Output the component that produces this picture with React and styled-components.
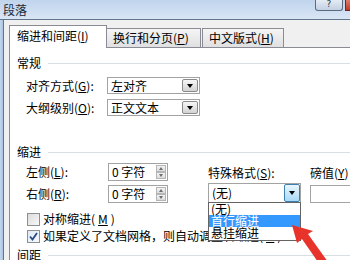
import React from "react";
import styled, { createGlobalStyle } from "styled-components";

const FONT = `"Noto Sans CJK SC", "Liberation Sans", sans-serif`;

const GlobalStyle = createGlobalStyle`
  html, body { margin: 0; padding: 0; background: #f0f0f0; }
  body { width: 350px; height: 260px; overflow: hidden; }
  * { box-sizing: border-box; }
`;

const Window = styled.div`
  position: relative;
  width: 350px;
  height: 260px;
  overflow: hidden;
  display: flex;
  flex-direction: column;
  font-family: ${FONT};
  font-size: 12px;
  line-height: 14px;
  color: #000;
  background: #f0f0f0;
`;

const TitleBar = styled.div`
  flex: none;
  height: 20px;
  display: flex;
  align-items: flex-start;
  justify-content: space-between;
  background: linear-gradient(#c0d4ec, #d9e6f5);
  border-bottom: 1px solid #63758d;
`;

const Title = styled.div`
  padding: 3px 0 0 3px;
  font-size: 12px;
  color: #1c2a3a;
`;

const Controls = styled.div`
  display: flex;
  gap: 2px;
`;

const HelpButton = styled.div`
  width: 28px;
  height: 11px;
  border: 1px solid #5c6b82;
  border-top: none;
  border-radius: 0 0 3px 3px;
  background: linear-gradient(#e4ebf4, #c2d0e2);
  font-family: "DejaVu Sans", sans-serif;
  font-size: 9px;
  line-height: 9px;
  text-align: center;
  color: #2c3644;
`;

const CloseButton = styled.div`
  width: 5px;
  height: 11px;
  border-left: 1px solid #6b2a22;
  border-bottom: 1px solid #6b2a22;
  background: linear-gradient(#e07a68, #c2392a);
`;

const Body = styled.div`
  flex: 1;
  display: flex;
  min-height: 0;
`;

const FrameEdge = styled.div`
  flex: none;
  width: 4px;
  background: linear-gradient(90deg, #c3d7ee, #a9c3e2);
  border-right: 1px solid #63758d;
`;

const Client = styled.div`
  flex: 1;
  min-width: 0;
  display: flex;
  flex-direction: column;
  padding: 5px 0 0 5px;
`;

const TabStrip = styled.div`
  flex: none;
  height: 22px;
  display: flex;
  align-items: flex-end;
  position: relative;
  z-index: 1;
`;

const Tab = styled.div`
  flex: none;
  width: ${(p) => p.$width}px;
  height: ${(p) => (p.$active ? 23 : 19)}px;
  margin-left: ${(p) => p.$gap || 0}px;
  margin-bottom: ${(p) => (p.$active ? -1 : 0)}px;
  padding: ${(p) => (p.$active ? "3px 0 0 7px" : "2px 0 0 6px")};
  border: 1px solid #898c95;
  border-bottom: none;
  background: ${(p) =>
    p.$active ? "#ffffff" : "linear-gradient(#f5f5f5, #e0e0e0)"};
  white-space: nowrap;
`;

const Panel = styled.div`
  flex: 1;
  display: flex;
  flex-direction: column;
  padding: 8px 0 0 7px;
  background: #ffffff;
  border-top: 1px solid #898c95;
  border-left: 1px solid #898c95;
`;

const SectionHeader = styled.div`
  display: flex;
  align-items: center;
  gap: 7px;
  height: 14px;
  margin-top: ${(p) => p.$top || 0}px;
  &::after {
    content: "";
    flex: 1;
    height: 1px;
    background: #d5dfe5;
  }
`;

const FieldRow = styled.div`
  display: flex;
  align-items: center;
  height: ${(p) => p.$height || 17}px;
  margin-left: ${(p) => p.$indent ?? 9}px;
  margin-top: ${(p) => p.$top || 0}px;
`;

const Label = styled.div`
  flex: none;
  width: ${(p) => p.$width || 82}px;
  white-space: nowrap;
`;

const Combo = styled.div`
  position: relative;
  flex: none;
  width: ${(p) => p.$width}px;
  height: ${(p) => p.$height || 17}px;
  margin-top: ${(p) => p.$top || 0}px;
  display: flex;
  align-items: center;
  justify-content: space-between;
  padding: 0 0 0 3px;
  border: 1px solid #a3a3a3;
  background: #fff;
  white-space: nowrap;
`;

const ArrowButton = styled.div`
  flex: none;
  align-self: stretch;
  width: 16px;
  margin: ${(p) => (p.$hot ? "0" : "1px")};
  display: flex;
  align-items: center;
  justify-content: center;
  border: 1px solid ${(p) => (p.$hot ? "#3c7fb1" : "#8a8a8a")};
  border-radius: 2px;
  background: ${(p) =>
    p.$hot
      ? "linear-gradient(#eaf6fd, #a7d9f5)"
      : "linear-gradient(#f6f6f6, #d3d3d3)"};
`;

const Caret = styled.span`
  width: 0;
  height: 0;
  border-left: 3.5px solid transparent;
  border-right: 3.5px solid transparent;
  border-top: 4px solid #000;
`;

const Spinner = styled.div`
  flex: none;
  width: 60px;
  height: 18px;
  display: flex;
  align-items: center;
  justify-content: space-between;
  padding-left: 3px;
  border: 1px solid #a3a3a3;
  background: #fff;
  white-space: nowrap;
`;

const SpinButtons = styled.div`
  flex: none;
  align-self: stretch;
  width: 10px;
  margin: 1px;
  display: flex;
  flex-direction: column;
  gap: 0;
`;

const SpinHalf = styled.div`
  flex: 1;
  display: flex;
  align-items: center;
  justify-content: center;
  border: 1px solid #b5b5b5;
  background: linear-gradient(#f4f4f4, #dcdcdc);
  &::before {
    content: "";
    border-left: 2.5px solid transparent;
    border-right: 2.5px solid transparent;
    ${(p) =>
      p.$up
        ? "border-bottom: 3px solid #6d6d6d;"
        : "border-top: 3px solid #6d6d6d;"}
  }
`;

const IndentArea = styled.div`
  display: flex;
  gap: 40px;
  margin: 4px 0 0 9px;
`;

const Column = styled.div`
  flex: none;
  display: flex;
  flex-direction: column;
  gap: ${(p) => p.$gap || 0}px;
  width: ${(p) => (p.$width ? `${p.$width}px` : "auto")};
`;

const SideFields = styled.div`
  display: flex;
  gap: 10px;
`;

const StackLabel = styled.div`
  margin-top: 3px;
  white-space: nowrap;
`;

const TextBox = styled.div`
  width: 60px;
  height: 18px;
  margin-top: 5px;
  border: 1px solid #a3a3a3;
  background: #fff;
`;

const DropList = styled.div`
  position: absolute;
  top: 100%;
  left: -1px;
  width: 93px;
  z-index: 2;
  border: 1px solid #646464;
  background: #fff;
  padding-bottom: 1px;
`;

const DropItem = styled.div`
  height: 12px;
  line-height: 12px;
  padding-left: 2px;
  color: ${(p) => (p.$selected ? "#fff" : "#000")};
  background: ${(p) => (p.$selected ? "#3399ff" : "transparent")};
`;

const CheckRow = styled.div`
  display: flex;
  align-items: center;
  gap: 3px;
  height: 14px;
  margin: ${(p) => p.$top || 0}px 0 0 10px;
  white-space: nowrap;
`;

const Box = styled.div`
  flex: none;
  width: 13px;
  height: 13px;
  display: flex;
  align-items: center;
  justify-content: center;
  border: 1px solid #8e8f8f;
  background: ${(p) =>
    p.$checked
      ? "linear-gradient(135deg, #dfe9f5, #f6f9fd)"
      : "linear-gradient(135deg, #dcdcdc, #f8f8f8)"};
`;

const Arrow = styled.svg`
  position: absolute;
  left: 0;
  top: 0;
  pointer-events: none;
  z-index: 3;
`;

const Key = ({ k }) => (
  <>
    (<u>{k}</u>)
  </>
);

export default function App() {
  return (
    <>
      <GlobalStyle />
      <Window>
        <TitleBar>
          <Title>段落</Title>
          <Controls>
            <HelpButton>?</HelpButton>
            <CloseButton />
          </Controls>
        </TitleBar>
        <Body>
          <FrameEdge />
          <Client>
            <TabStrip>
              <Tab $active $width={98}>
                缩进和间距<Key k="I" />
              </Tab>
              <Tab $width={95} $gap={-1}>
                换行和分页<Key k="P" />
              </Tab>
              <Tab $width={82} $gap={1}>
                中文版式<Key k="H" />
              </Tab>
            </TabStrip>
            <Panel>
              <SectionHeader>常规</SectionHeader>
              <FieldRow $top={7}>
                <Label $width={81}>
                  对齐方式<Key k="G" />:
                </Label>
                <Combo $width={93}>
                  左对齐
                  <ArrowButton>
                    <Caret />
                  </ArrowButton>
                </Combo>
              </FieldRow>
              <FieldRow $top={5}>
                <Label $width={81}>
                  大纲级别<Key k="O" />:
                </Label>
                <Combo $width={93}>
                  正文文本
                  <ArrowButton>
                    <Caret />
                  </ArrowButton>
                </Combo>
              </FieldRow>

              <SectionHeader $top={29}>缩进</SectionHeader>
              <IndentArea>
                <Column $gap={4}>
                  <FieldRow $indent={0} $height={18}>
                    <Label>
                      左侧<Key k="L" />:
                    </Label>
                    <Spinner>
                      0 字符
                      <SpinButtons>
                        <SpinHalf $up />
                        <SpinHalf />
                      </SpinButtons>
                    </Spinner>
                  </FieldRow>
                  <FieldRow $indent={0} $height={18}>
                    <Label>
                      右侧<Key k="R" />:
                    </Label>
                    <Spinner>
                      0 字符
                      <SpinButtons>
                        <SpinHalf $up />
                        <SpinHalf />
                      </SpinButtons>
                    </Spinner>
                  </FieldRow>
                </Column>
                <SideFields>
                  <Column $width={92}>
                    <StackLabel>
                      特殊格式<Key k="S" />:
                    </StackLabel>
                    <Combo $width={93} $height={20} $top={3}>
                      (无)
                      <ArrowButton $hot>
                        <Caret />
                      </ArrowButton>
                      <DropList>
                        <DropItem>(无)</DropItem>
                        <DropItem $selected>首行缩进</DropItem>
                        <DropItem>悬挂缩进</DropItem>
                      </DropList>
                    </Combo>
                  </Column>
                  <Column>
                    <StackLabel>
                      磅值<Key k="Y" />
                    </StackLabel>
                    <TextBox />
                  </Column>
                </SideFields>
              </IndentArea>

              <CheckRow $top={9}>
                <Box />
                对称缩进<Key k="M" />
              </CheckRow>
              <CheckRow $top={3}>
                <Box $checked>
                  <svg width="9" height="9" viewBox="0 0 9 9">
                    <path
                      d="M1 4.5 L3.5 7.5 L8 1"
                      fill="none"
                      stroke="#2a4a86"
                      strokeWidth="1.8"
                    />
                  </svg>
                </Box>
                如果定义了文档网格，则自动调整右缩进<Key k="D" />
              </CheckRow>

              <SectionHeader $top={5}>间距</SectionHeader>
            </Panel>
          </Client>
        </Body>
        <Arrow width="350" height="260" viewBox="0 0 350 260">
          <polygon
            points="292,225 297,243 302,239 318,262 328,262 308,234 313,231"
            fill="#e8332b"
          />
        </Arrow>
      </Window>
    </>
  );
}
